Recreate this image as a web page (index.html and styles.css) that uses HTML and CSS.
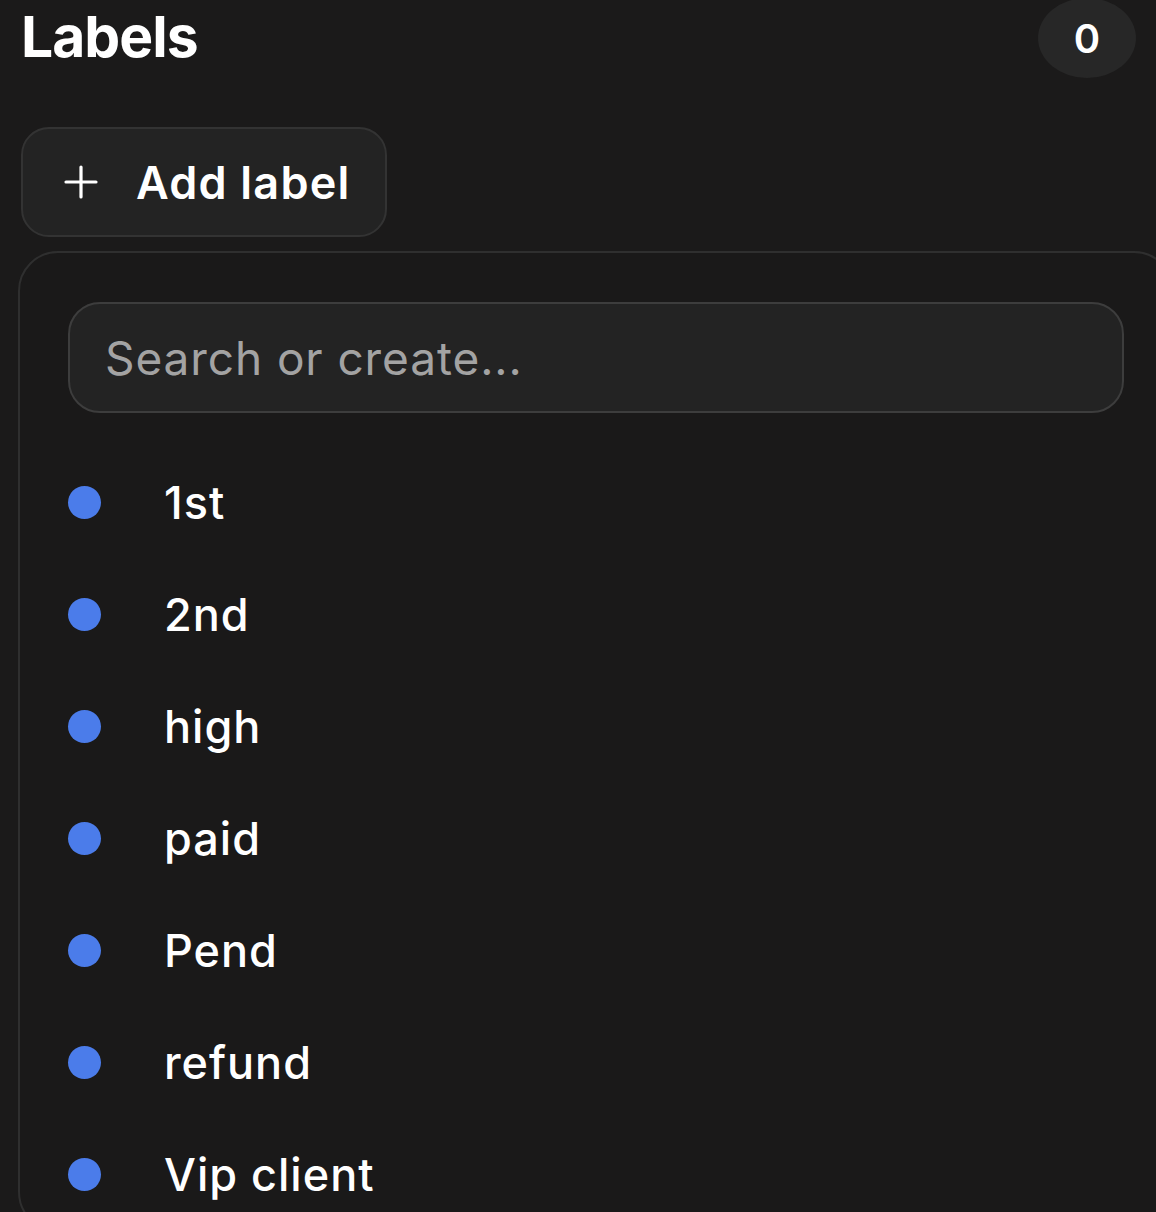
FILE: index.html
```html
<!DOCTYPE html>
<html lang="en">
<head>
<meta charset="utf-8">
<title>Labels</title>
<link rel="stylesheet" href="styles.css">
</head>
<body>
<div class="page">
  <div class="header">
    <h1 class="title">Labels</h1>
    <span class="count">0</span>
  </div>
  <button class="add-btn" type="button">
    <svg class="plus" viewBox="0 0 34 34" width="34" height="34" aria-hidden="true">
      <path d="M17 2 V32 M2 17 H32" stroke="#ffffff" stroke-width="3.2" stroke-linecap="round" fill="none"/>
    </svg>
    <span>Add label</span>
  </button>
  <div class="panel">
    <input class="search" type="text" placeholder="Search or create...">
    <ul class="list">
      <li class="item"><span class="dot"></span><span class="name">1st</span></li>
      <li class="item"><span class="dot"></span><span class="name">2nd</span></li>
      <li class="item"><span class="dot"></span><span class="name">high</span></li>
      <li class="item"><span class="dot"></span><span class="name">paid</span></li>
      <li class="item"><span class="dot"></span><span class="name">Pend</span></li>
      <li class="item"><span class="dot"></span><span class="name">refund</span></li>
      <li class="item"><span class="dot"></span><span class="name">Vip client</span></li>
    </ul>
  </div>
</div>
</body>
</html>
```

FILE: styles.css
```css
* { box-sizing: border-box; }
html, body {
  margin: 0;
  padding: 0;
  background: #1b1a1a;
  height: 100%;
  overflow: hidden;
}
body {
  font-family: Inter, "Noto Sans", sans-serif;
  color: #ffffff;
}
.page {
  display: flex;
  flex-direction: column;
  align-items: flex-start;
}
.header {
  width: 100%;
  display: flex;
  justify-content: space-between;
  align-items: center;
  height: 80px;
  margin-top: -2px;
  padding: 0 20px 0 20px;
}
.title {
  margin: 0;
  font-size: 57px;
  font-weight: 700;
  line-height: 1;
  letter-spacing: -1px;
  margin-top: -4px;
  padding-left: 1px;
}
.count {
  width: 98px;
  height: 80px;
  border-radius: 50%;
  background: #272727;
  display: flex;
  align-items: center;
  justify-content: center;
  font-size: 40px;
  font-weight: 600;
}
.add-btn {
  margin: 49px 0 0 21px;
  width: 366px;
  height: 110px;
  border-radius: 28px;
  background: #232323;
  border: 2px solid #333333;
  display: flex;
  align-items: center;
  gap: 38px;
  padding: 0 0 0 41px;
  color: #ffffff;
  font-family: Inter, "Noto Sans", sans-serif;
  font-size: 45px;
  font-weight: 600;
  letter-spacing: 1.2px;
  cursor: pointer;
}
.plus { flex: none; }
.panel {
  margin: 14px 0 0 18px;
  width: 1156px;
  flex: none;
  border: 2px solid #2f2f2f;
  border-radius: 40px;
  padding: 49px 0 0 48px;
  background: #1a1919;
}
.search {
  display: block;
  width: 1056px;
  height: 111px;
  border-radius: 32px;
  border: 2px solid #3d3d3d;
  background: #232323;
  padding: 0 0 0 35px;
  font-family: Inter, "Noto Sans", sans-serif;
  font-size: 46px;
  letter-spacing: 0.9px;
  color: #ffffff;
  outline: none;
}
.search::placeholder { color: #a3a3a3; }
.list {
  list-style: none;
  margin: 33px 0 0 0;
  padding: 0;
}
.item {
  height: 112px;
  display: flex;
  align-items: center;
  padding-left: 0;
}
.dot {
  width: 33px;
  height: 33px;
  border-radius: 50%;
  background: #4b7cea;
  flex: none;
}
.name {
  margin-left: 63px;
  font-size: 45px;
  font-weight: 500;
  letter-spacing: 1px;
}
```
